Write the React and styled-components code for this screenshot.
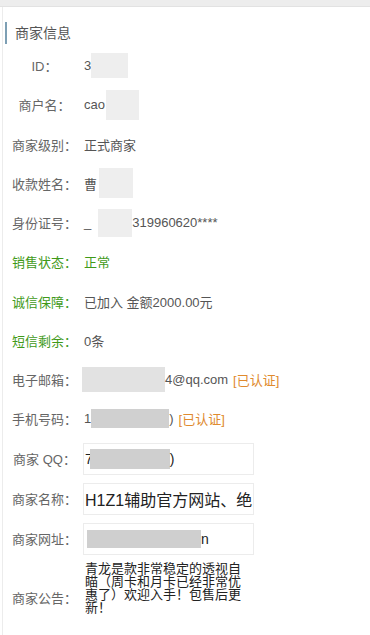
import styled, { createGlobalStyle } from "styled-components";

const GlobalStyle = createGlobalStyle`
  body {
    margin: 0;
    background: #fff;
    font-family: "Liberation Sans", "Noto Sans CJK SC", sans-serif;
  }
`;

const rows = [
  { label: "ID：", value: "3", mask: { w: 37, h: 25, ml: 0, c: "#eeeeee" } },
  { label: "商户名：", value: "cao", mask: { w: 33, h: 30, ml: 1, c: "#eeeeee" } },
  { label: "商家级别：", value: "正式商家" },
  { label: "收款姓名：", value: "曹", mask: { w: 34, h: 30, ml: 2, c: "#eeeeee" } },
  { label: "身份证号：", pre: "_", value: "319960620****", mask: { w: 34, h: 28, ml: 7, c: "#eeeeee", after: true } },
  { label: "销售状态：", value: "正常", green: true, greenValue: true },
  { label: "诚信保障：", value: "已加入 金额2000.00元", green: true },
  { label: "短信剩余：", value: "0条", green: true },
  { label: "电子邮箱：", value: "4@qq.com", mask: { w: 83, h: 25, ml: -2, c: "#e2e2e2", before: true }, tag: "[已认证]" },
  { label: "手机号码：", pre: "1", value: ")", mask: { w: 78, h: 19, ml: 0, c: "#d0d0d0", after: true }, tag: "[已认证]" },
];

export default function App() {
  return (
    <>
      <GlobalStyle />
      <TopStrip />
      <Panel>
        <Title>商家信息</Title>
        <List>
          {rows.map((r) => (
            <Row key={r.label}>
              <Label $green={r.green}>{r.label}</Label>
              <Value $green={r.greenValue}>
                {r.mask && r.mask.before && <Mask {...maskProps(r.mask)} />}
                {r.pre}
                {r.mask && r.mask.after && <Mask {...maskProps(r.mask)} />}
                {r.value}
                {r.mask && !r.mask.before && !r.mask.after && <Mask {...maskProps(r.mask)} />}
                {r.tag && <Tag>{r.tag}</Tag>}
              </Value>
            </Row>
          ))}
          <InputRow>
            <Label>商家 QQ：</Label>
            <Field>
              7<Mask $w={80} $h={20} $ml={-3} $c="#cfcfcf" />)
            </Field>
          </InputRow>
          <InputRow>
            <Label>商家名称：</Label>
            <Field $big>H1Z1辅助官方网站、绝</Field>
          </InputRow>
          <InputRow>
            <Label>商家网址：</Label>
            <Field>
              <Mask $w={114} $h={18} $ml={2} $c="#cfcfcf" />n
            </Field>
          </InputRow>
          <NoticeRow>
            <NoticeLabel>商家公告：</NoticeLabel>
            <Notice>青龙是款非常稳定的透视自瞄（周卡和月卡已经非常优惠了）欢迎入手！包售后更新！</Notice>
          </NoticeRow>
        </List>
      </Panel>
    </>
  );
}

const maskProps = (m) => ({ $w: m.w, $h: m.h, $ml: m.ml, $c: m.c });

const TopStrip = styled.div`
  height: 6px;
  background: #ededed;
  border-bottom: 1px solid #e2e2e2;
`;

const Panel = styled.div`
  margin-left: 2px;
  border-left: 1px solid #ececec;
  padding-top: 15px;
  height: 628px;
  box-sizing: border-box;
`;

const Title = styled.div`
  margin-left: 2px;
  border-left: 2px solid #7d9fb4;
  padding-left: 8px;
  height: 22px;
  line-height: 22px;
  font-size: 14px;
  color: #555;
`;

const List = styled.div`
  margin-top: 2px;
  display: flex;
  flex-direction: column;
`;

const Row = styled.div`
  display: grid;
  grid-template-columns: 65px 1fr;
  column-gap: 7px;
  padding-left: 9px;
  align-items: center;
  height: 39.25px;
  font-size: 13px;
`;

const InputRow = styled(Row)`
  height: 40px;
`;

const NoticeRow = styled(Row)`
  height: 60px;
  align-items: start;
`;

const Label = styled.div`
  text-align: center;
  color: ${(p) => (p.$green ? "#3f9a19" : "#666")};
  white-space: nowrap;
`;

const NoticeLabel = styled(Label)`
  padding-top: 29px;
`;

const Value = styled.div`
  display: flex;
  align-items: center;
  color: ${(p) => (p.$green ? "#3f9a19" : "#555")};
  white-space: nowrap;
`;

const Mask = styled.span`
  display: inline-block;
  width: ${(p) => p.$w}px;
  height: ${(p) => p.$h}px;
  margin-left: ${(p) => p.$ml}px;
  background: ${(p) => p.$c};
`;

const Tag = styled.span`
  margin-left: 5px;
  color: #e08a2e;
`;

const Field = styled.div`
  width: 171px;
  height: 32px;
  margin-left: -1px;
  box-sizing: border-box;
  border: 1px solid #ececec;
  display: flex;
  align-items: center;
  padding-left: 1px;
  overflow: hidden;
  white-space: nowrap;
  color: #222;
  font-size: ${(p) => (p.$big ? "16px" : "14px")};
`;

const Notice = styled.div`
  width: 158px;
  margin-top: 3px;
  font-size: 13px;
  line-height: 13px;
  color: #222;
  padding-left: 1px;
`;
